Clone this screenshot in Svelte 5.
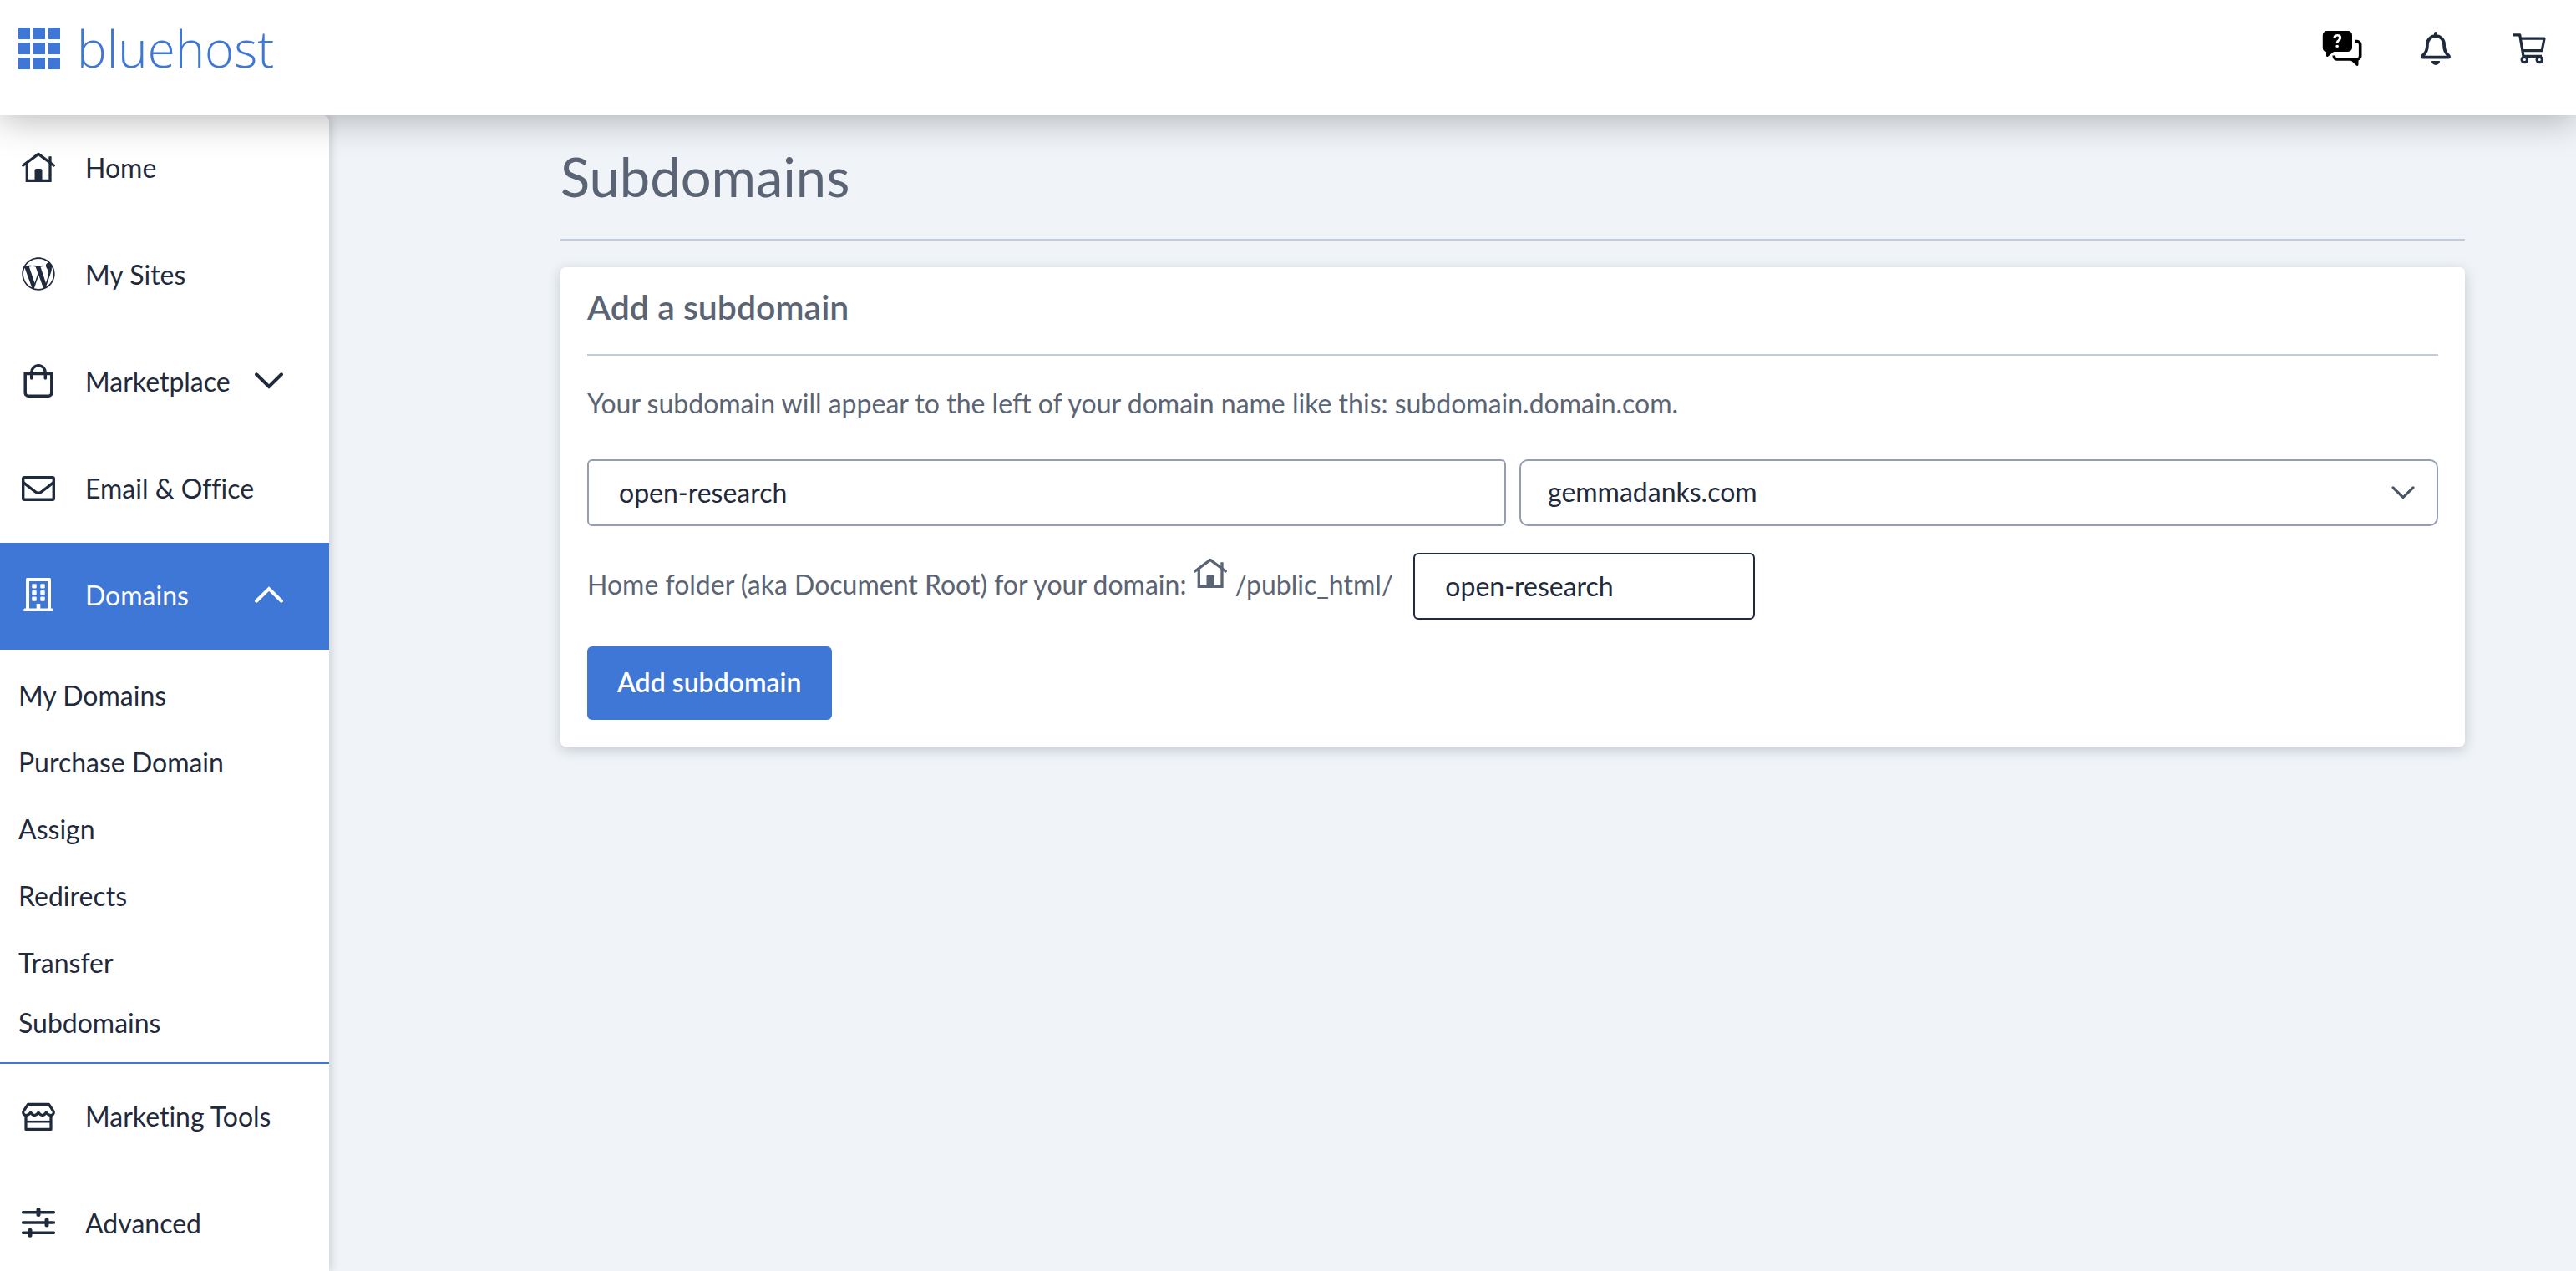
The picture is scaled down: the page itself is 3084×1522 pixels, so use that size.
<script>
  const navTop = [
    { label: 'Home', icon: 'home' },
    { label: 'My Sites', icon: 'wordpress' },
    { label: 'Marketplace', icon: 'bag', expandable: true },
    { label: 'Email & Office', icon: 'mail' },
    { label: 'Domains', icon: 'building', expandable: true, active: true }
  ];
  const submenu = ['My Domains', 'Purchase Domain', 'Assign', 'Redirects', 'Transfer', 'Subdomains'];
  const navBottom = [
    { label: 'Marketing Tools', icon: 'store' },
    { label: 'Advanced', icon: 'sliders' }
  ];
  const squares = [0, 18, 36];

  let subdomain = $state('open-research');
  let domain = $state('gemmadanks.com');
  let folder = $state('open-research');
</script>

{#snippet icon(name)}
  <svg class="icon" viewBox="0 0 40 40" aria-hidden="true">
    {#if name === 'home'}
      <g fill="none" stroke="currentColor" stroke-width="3.3" stroke-linecap="round" stroke-linejoin="round">
        <path d="M1.7 18 L20 4.4 L38.3 18" />
        <path d="M6.3 15.5 V36.4 H34 V7.2" stroke-linecap="butt" stroke-linejoin="miter" />
      </g>
      <path d="M15.5 36 V24 a2 2 0 0 1 2-2 h5 a2 2 0 0 1 2 2 V36 Z" fill="currentColor" />
    {:else if name === 'wordpress'}
      <g transform="scale(1.6667)">
        <path fill="currentColor" fill-rule="evenodd" d="M21.469 6.825c.84 1.537 1.318 3.3 1.318 5.175 0 3.979-2.156 7.456-5.363 9.325l3.295-9.527c.615-1.54.82-2.771.82-3.864 0-.405-.026-.78-.07-1.11m-7.981.105c.647-.03 1.232-.105 1.232-.105.582-.075.514-.93-.067-.899 0 0-1.755.135-2.88.135-1.064 0-2.85-.15-2.85-.15-.585-.03-.661.855-.075.885 0 0 .54.061 1.125.09l1.68 4.605-2.37 7.08L5.354 6.9c.649-.03 1.234-.1 1.234-.1.585-.075.516-.93-.065-.896 0 0-1.746.138-2.874.138-.2 0-.438-.008-.69-.015C4.911 3.15 8.235 1.215 12 1.215c2.809 0 5.365 1.072 7.286 2.833-.046-.003-.091-.009-.141-.009-1.06 0-1.812.923-1.812 1.914 0 .89.513 1.643 1.06 2.531.411.72.89 1.643.89 2.977 0 .915-.354 1.994-.821 3.479l-1.075 3.585-3.9-11.61.001.014zM12 22.784c-1.059 0-2.081-.153-3.048-.437l3.237-9.406 3.315 9.087c.024.053.05.101.078.149-1.12.393-2.325.609-3.582.609M1.211 12c0-1.564.336-3.05.935-4.39L7.29 21.709C3.694 19.96 1.212 16.271 1.211 12M12 .2C5.5.2.2 5.5.2 12S5.5 23.8 12 23.8 23.8 18.5 23.8 12 18.5.2 12 .2" />
      </g>
    {:else if name === 'bag'}
      <g fill="none" stroke="currentColor" stroke-width="3.5">
        <path d="M4.2 11.6 H35.8 V34.5 a3.7 3.7 0 0 1 -3.7 3.7 H7.9 a3.7 3.7 0 0 1 -3.7 -3.7 Z" />
        <path d="M11.7 17 V10 a8.3 8.3 0 0 1 16.6 0 V17" stroke-linecap="round" />
      </g>
    {:else if name === 'mail'}
      <g fill="none" stroke="currentColor" stroke-width="3.4" stroke-linejoin="round">
        <rect x="1.7" y="7.7" width="36.6" height="26.6" rx="1.6" />
        <path d="M1.8 13.6 L16.5 25 Q20 27.6 23.5 25 L38.2 13.6" />
      </g>
    {:else if name === 'building'}
      <g fill="currentColor">
        <path fill-rule="evenodd" d="M5 37 V1.5 A1.5 1.5 0 0 1 6.5 0 H33.5 A1.5 1.5 0 0 1 35 1.5 V37 H31 V4 H9 V37 Z" />
        <path d="M3.8 36.5 H17.7 V31 h4.6 V36.5 H36.2 a1.5 1.5 0 0 1 1.5 1.5 V40 H2.3 V38 a1.5 1.5 0 0 1 1.5 -1.5 Z" />
        {#each [7.2, 15, 22.6] as y}
          <rect x="12.3" {y} width="5.4" height="5.2" rx="1" />
          <rect x="22.3" {y} width="5.4" height="5.2" rx="1" />
        {/each}
      </g>
    {:else if name === 'store'}
      <g fill="none" stroke="currentColor" stroke-width="3.2" stroke-linejoin="round">
        <path d="M7.5 6.3 H32.5 L38 14.8 C39 17.5 37 19.6 34.5 19.6 C32 19.6 30.5 18 29.3 16.2 C28 18 27 19.6 24.7 19.6 C22.4 19.6 21.2 18 20 16.2 C18.8 18 17.6 19.6 15.3 19.6 C13 19.6 12 18 10.7 16.2 C9.5 18 8 19.6 5.5 19.6 C3 19.6 1 17.5 2 14.8 Z" />
        <path d="M5 19.5 V36.4 H35 V19.5" />
        <path d="M5 27.2 H35" stroke-width="2.6" />
      </g>
    {:else if name === 'sliders'}
      <g fill="none" stroke="currentColor" stroke-width="3.5" stroke-linecap="round">
        <path d="M1.7 7.7 H38.3 M1.7 20 H38.3 M1.7 32.3 H38.3" />
        <path d="M20 4.6 V10.6 M30 17 V23 M10 29.3 V35.3" stroke-width="5" />
      </g>
    {:else if name === 'bell'}
      <path d="M20 5.2 C14.2 5.2 10 9.5 10 15 C10 22 8.5 25 4.3 29 Q3.3 30.6 5 30.6 H35 Q36.7 30.6 35.7 29 C31.5 25 30 22 30 15 C30 9.5 25.8 5.2 20 5.2 Z" fill="none" stroke="currentColor" stroke-width="3.8" stroke-linejoin="round" />
      <path d="M18 5 V2 a2 2 0 0 1 4 0 V5 Z M15 35 H25 A5 5 0 0 1 15 35 Z" fill="currentColor" />
    {:else if name === 'cart'}
      <g fill="none" stroke="currentColor" stroke-width="3.2">
        <path d="M0 3.8 H8.7 L13 29.4 H35" stroke-linejoin="round" />
        <path d="M9.8 8.2 H38 L35.2 22.7 H12.2" stroke-linejoin="round" />
        <circle cx="14.3" cy="33.5" r="3.2" />
        <circle cx="32.3" cy="33.5" r="3.2" />
      </g>
    {/if}
  </svg>
{/snippet}

{#snippet chevron(up)}
  <svg class="chevron" class:up viewBox="0 0 34 20" aria-hidden="true">
    <path d="M2 2.3 L17 17 L32 2.3" fill="none" stroke="currentColor" stroke-width="4" stroke-linecap="round" />
  </svg>
{/snippet}

{#snippet navItem(item)}
  <li>
    <a class="nav-link" class:active={item.active} href="#{item.icon}" aria-expanded={item.expandable ? !!item.active : undefined}>
      {@render icon(item.icon)}
      <span class="nav-label">{item.label}</span>
      {#if item.expandable}{@render chevron(item.active)}{/if}
    </a>
    {#if item.active}
      <ul class="submenu">
        {#each submenu as entry}
          <li><a href="#{entry}">{entry}</a></li>
        {/each}
      </ul>
    {/if}
  </li>
{/snippet}

<div class="app">
  <header>
    <a class="brand" href="#home" aria-label="bluehost">
      <svg class="mark" viewBox="0 0 50 50" aria-hidden="true">
        {#each squares as y}
          {#each squares as x}
            <rect {x} {y} width="14" height="14" fill="currentColor" />
          {/each}
        {/each}
      </svg>
      <span>bluehost</span>
    </a>
    <div class="tools">
      <button type="button" aria-label="Help chat">
        <svg class="chat" viewBox="0 0 44 40" aria-hidden="true">
          <path d="M6 -1 H31 a5 5 0 0 1 5 5 V19 a5 5 0 0 1 -5 5 H14 L6.8 30 Q5 30.5 5 28.5 V24 a5 5 0 0 1 -4.2 -5 V4 a5 5 0 0 1 5.2 -5 Z" fill="currentColor" />
          <path d="M39.3 11.5 h2.4 a4 4 0 0 1 4 4 V29 a4 4 0 0 1 -4 4 H18 a3.7 3.7 0 0 1 -3.7 -3.7 V28.5" fill="none" stroke="currentColor" stroke-width="3.6" />
          <path d="M33 33 H43.5 V39 Q43.3 42 41 40.5 Z" fill="currentColor" />
          <text x="18.5" y="19.2" text-anchor="middle">?</text>
        </svg>
      </button>
      <button type="button" aria-label="Notifications">{@render icon('bell')}</button>
      <button type="button" aria-label="Cart">{@render icon('cart')}</button>
    </div>
  </header>

  <div class="body">
    <nav aria-label="Main">
      <ul>
        {#each navTop as item}{@render navItem(item)}{/each}
        {#each navBottom as item}{@render navItem(item)}{/each}
      </ul>
    </nav>

    <main>
      <h1>Subdomains</h1>
      <form class="card" onsubmit={(e) => e.preventDefault()}>
        <h2>Add a subdomain</h2>
        <p>Your subdomain will appear to the left of your domain name like this: subdomain.domain.com.</p>
        <div class="fields">
          <input class="field" type="text" aria-label="Subdomain" bind:value={subdomain} />
          <div class="select">
            <select class="field" aria-label="Domain" bind:value={domain}>
              <option>gemmadanks.com</option>
            </select>
            {@render chevron(false)}
          </div>
        </div>
        <div class="folder">
          <label for="folder">
            Home folder (aka Document Root) for your domain:
            <span class="root-icon">{@render icon('home')}</span>
            /public_html/
          </label>
          <input id="folder" class="field dark" type="text" bind:value={folder} />
        </div>
        <button class="submit" type="submit">Add subdomain</button>
      </form>
    </main>
  </div>
</div>

<style>
  :global(body) {
    margin: 0;
  }
  .app {
    --ink: #1f2a3c;
    --muted: #5a6474;
    --blue: #3f77d6;
    --line: #c3cad9;
    display: flex;
    flex-direction: column;
    height: 100vh;
    overflow: hidden;
    background: #f0f4f8;
    color: var(--muted);
    font: 32px/40px Lato, "Open Sans", sans-serif;
    font-variant-ligatures: none;
  }
  .app * {
    box-sizing: border-box;
  }
  a {
    color: inherit;
    text-decoration: none;
  }
  ul {
    margin: 0;
    padding: 0;
    list-style: none;
  }
  button {
    padding: 0;
    border: 0;
    background: none;
    color: inherit;
    font: inherit;
    cursor: pointer;
  }
  .icon {
    display: block;
    flex: none;
    width: 40px;
    height: 40px;
  }

  header {
    position: relative;
    z-index: 2;
    display: flex;
    flex: none;
    align-items: center;
    justify-content: space-between;
    height: 138px;
    padding: 0 36px 22px 22px;
    background: #fff;
    box-shadow: 0 6px 40px rgba(0, 0, 0, 0.28);
    color: var(--ink);
  }
  .brand {
    display: flex;
    align-items: center;
    gap: 20px;
    color: var(--blue);
    font: 300 60px/80px "Open Sans", sans-serif;
  }
  .mark {
    width: 50px;
    height: 50px;
  }
  .tools {
    display: flex;
    gap: 72px;
  }
  .chat {
    display: block;
    width: 44px;
    height: 40px;
    overflow: visible;
    color: #000;
  }
  .chat text {
    fill: #fff;
    font: 700 22px Roboto, sans-serif;
  }

  .body {
    display: flex;
    flex: 1;
    min-height: 0;
  }
  nav {
    position: relative;
    z-index: 1;
    flex: none;
    width: 394px;
    overflow-y: auto;
    scrollbar-width: none;
    border-top-right-radius: 8px;
    background: #fff;
    box-shadow: 2px 0 12px rgba(0, 0, 0, 0.16);
    color: var(--ink);
  }
  .nav-link {
    display: flex;
    align-items: center;
    gap: 36px;
    height: 128px;
    padding: 0 55px 4px 26px;
  }
  .nav-link.active {
    background: var(--blue);
    color: #fff;
  }
  .nav-label {
    flex: 1;
    padding-top: 2px;
    white-space: nowrap;
  }
  .chevron {
    display: block;
    flex: none;
    width: 34px;
    height: 20px;
  }
  .nav-link .chevron {
    margin-left: -36px;
  }
  .chevron.up {
    transform: rotate(180deg);
  }
  .submenu {
    padding: 15px 0;
    border-bottom: 2px solid var(--blue);
  }
  .submenu a {
    display: block;
    padding: 20px 22px;
  }
  .submenu li:last-child a {
    padding: 12px 22px;
  }

  main {
    flex: 1;
    min-width: 0;
    padding: 34px 133px 32px 277px;
  }
  h1 {
    margin: 0 0 32px;
    padding: 0 0 36px;
    border-bottom: 2px solid var(--line);
    font-size: 65px;
    font-weight: 400;
    line-height: 78px;
  }
  .card {
    display: flex;
    flex-direction: column;
    gap: 32px;
    padding: 20px 32px 32px;
    border-radius: 6px;
    background: #fff;
    box-shadow: 0 4px 16px rgba(30, 42, 60, 0.22);
  }
  h2 {
    margin: 0;
    padding-bottom: 28px;
    border-bottom: 2px solid var(--line);
    font-size: 41px;
    font-weight: 600;
    line-height: 56px;
  }
  p {
    margin: 0 0 10px;
    line-height: 50px;
  }
  .fields {
    display: grid;
    grid-template-columns: 1fr 1fr;
    gap: 16px;
  }
  .field {
    width: 100%;
    height: 80px;
    padding: 0 36px 2px;
    border: 2px solid #949eb1;
    border-radius: 6px;
    outline: 0;
    background: #fff;
    color: var(--ink);
    font: inherit;
    appearance: none;
  }
  .select {
    position: relative;
  }
  .select .field {
    padding: 0 32px 2px;
    border-radius: 10px;
  }
  .select .chevron {
    position: absolute;
    top: 32px;
    right: 28px;
    width: 28px;
    height: 16px;
    color: #4a5464;
    stroke-width: 5;
    pointer-events: none;
  }
  .folder {
    display: flex;
    align-items: center;
    gap: 24px;
  }
  .folder label {
    display: flex;
    align-items: center;
    gap: 9px;
    padding-bottom: 4px;
    white-space: nowrap;
  }
  .root-icon {
    padding-bottom: 28px;
  }
  .folder .field {
    width: 409px;
  }
  .field.dark {
    border-color: var(--ink);
  }
  .submit {
    align-self: flex-start;
    height: 88px;
    padding: 0 36px 2px;
    border-radius: 6px;
    background: var(--blue);
    color: #fff;
    font-weight: 600;
  }
</style>
